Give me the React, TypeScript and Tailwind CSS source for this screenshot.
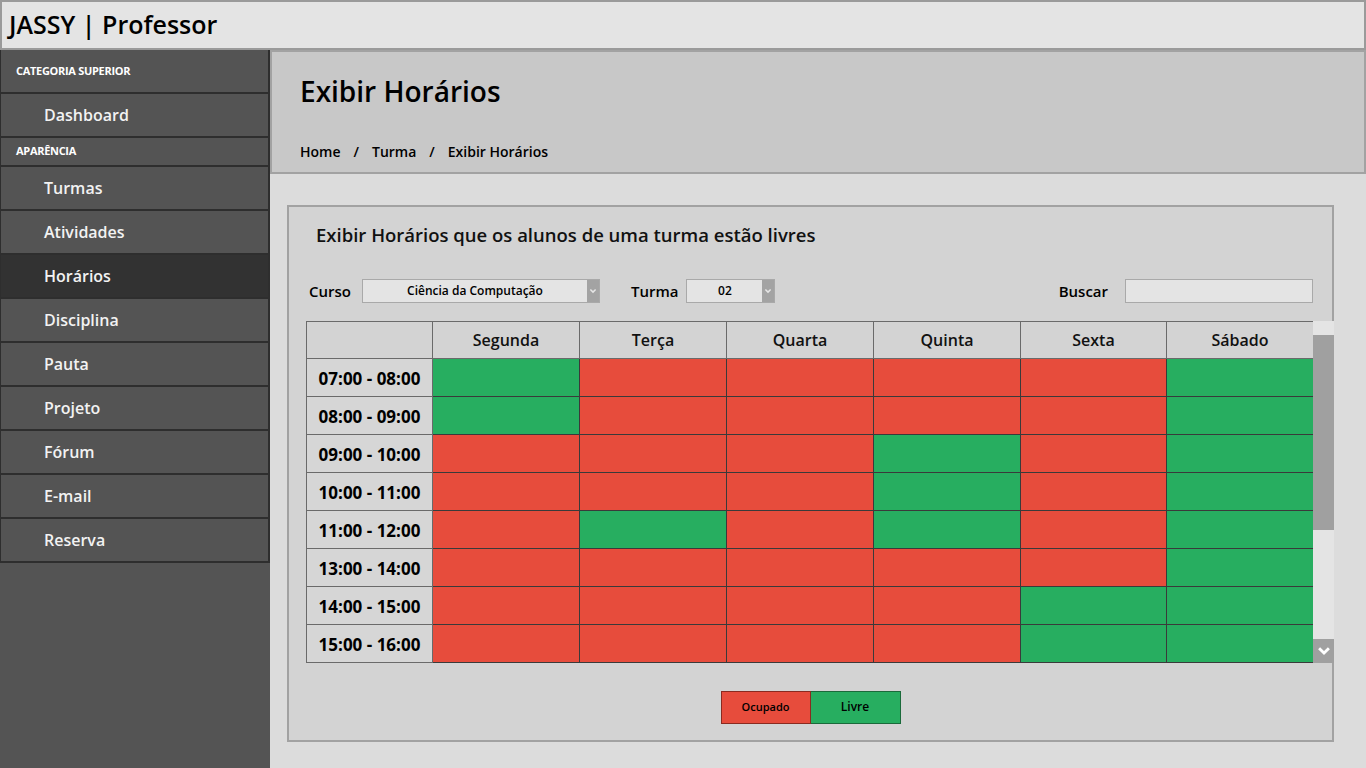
import React from 'react';

const font = { fontFamily: '"Open Sans", "Noto Sans", "Liberation Sans", sans-serif' };

type Item = { label: string; kind: 'cat' | 'item'; active?: boolean };

const menu: Item[] = [
  { label: 'CATEGORIA SUPERIOR', kind: 'cat' },
  { label: 'Dashboard', kind: 'item' },
  { label: 'APARÊNCIA', kind: 'cat' },
  { label: 'Turmas', kind: 'item' },
  { label: 'Atividades', kind: 'item' },
  { label: 'Horários', kind: 'item', active: true },
  { label: 'Disciplina', kind: 'item' },
  { label: 'Pauta', kind: 'item' },
  { label: 'Projeto', kind: 'item' },
  { label: 'Fórum', kind: 'item' },
  { label: 'E-mail', kind: 'item' },
  { label: 'Reserva', kind: 'item' },
];

const days = ['Segunda', 'Terça', 'Quarta', 'Quinta', 'Sexta', 'Sábado'];

// 1 = livre (verde), 0 = ocupado (vermelho)
const rows: { time: string; slots: number[] }[] = [
  { time: '07:00 - 08:00', slots: [1, 0, 0, 0, 0, 1] },
  { time: '08:00 - 09:00', slots: [1, 0, 0, 0, 0, 1] },
  { time: '09:00 - 10:00', slots: [0, 0, 0, 1, 0, 1] },
  { time: '10:00 - 11:00', slots: [0, 0, 0, 1, 0, 1] },
  { time: '11:00 - 12:00', slots: [0, 1, 0, 1, 0, 1] },
  { time: '13:00 - 14:00', slots: [0, 0, 0, 0, 0, 1] },
  { time: '14:00 - 15:00', slots: [0, 0, 0, 0, 1, 1] },
  { time: '15:00 - 16:00', slots: [0, 0, 0, 0, 1, 1] },
];

const Chevron: React.FC<{ className?: string }> = ({ className }) => (
  <svg viewBox="0 0 10 8" className={className}>
    <path d="M1.5 2 L5 5.5 L8.5 2" fill="none" stroke="currentColor" strokeWidth="2" />
  </svg>
);

const Select: React.FC<{ value: string; width: string }> = ({ value, width }) => (
  <div className={`flex h-[24px] ${width} border border-[#a9a9a9] bg-[#e4e4e4]`}>
    <div className="flex flex-1 items-center justify-center text-[12px] font-semibold text-black">{value}</div>
    <div className="flex w-[12px] items-center justify-center bg-[#a3a3a3] text-[#e6e6e6]">
      <Chevron className="h-[6px] w-[8px]" />
    </div>
  </div>
);

const Sidebar: React.FC = () => (
  <aside className="flex w-[270px] shrink-0 flex-col bg-[#545454]">
    {menu.map((m) =>
      m.kind === 'cat' ? (
        <div
          key={m.label}
          className={`flex items-center border-b-2 border-r-2 border-l border-[#2e2e2e] pl-[15px] text-[11px] font-bold tracking-[-0.3px] text-white ${
            m.label === 'APARÊNCIA' ? 'h-[29px]' : 'h-[44px]'
          }`}
        >
          {m.label}
        </div>
      ) : (
        <div
          key={m.label}
          className={`flex h-[44px] items-center border-b-2 border-r-2 border-l border-[#2e2e2e] pl-[43px] text-[16px] font-semibold text-[#f2f2f2] ${
            m.active ? 'bg-[#323232]' : 'bg-[#545454]'
          }`}
        >
          {m.label}
        </div>
      )
    )}
  </aside>
);

const Table: React.FC = () => (
  <div className="mt-[18px] flex">
    <div className="w-[1007px] shrink-0">
      <div className="grid h-[38px] grid-cols-[126px_147px_147px_147px_147px_146px_147px] border-t border-l border-[#6a6a6a] bg-[#d3d3d3]">
        <div className="border-r border-b border-[#6a6a6a]" />
        {days.map((d) => (
          <div
            key={d}
            className="flex items-center justify-center border-r border-b border-[#6a6a6a] text-[16px] font-semibold text-[#111]"
          >
            {d}
          </div>
        ))}
      </div>
      {rows.map((r) => (
        <div
          key={r.time}
          className="grid h-[38px] grid-cols-[126px_147px_147px_147px_147px_146px_147px] border-l border-[#6a6a6a]"
        >
          <div className="flex items-center justify-center border-r border-b border-[#6a6a6a] bg-[#d6d6d6] pt-[3px] text-[17px] font-bold text-black">
            {r.time}
          </div>
          {r.slots.map((s, i) => (
            <div
              key={i}
              className={`border-r border-b border-[#3a3a3a] ${s ? 'bg-[#27ae60]' : 'bg-[#e74c3c]'}`}
            />
          ))}
        </div>
      ))}
    </div>
    <div className="flex w-[21px] shrink-0 flex-col bg-[#e4e4e4]">
      <div className="h-[14px]" />
      <div className="h-[195px] bg-[#a0a0a0]" />
      <div className="flex-1" />
      <div className="flex h-[24px] items-center justify-center bg-[#a0a0a0] text-white">
        <Chevron className="h-[12px] w-[14px]" />
      </div>
    </div>
  </div>
);

export default function App() {
  return (
    <div className="flex h-[768px] w-[1366px] flex-col overflow-hidden bg-[#dcdcdc]" style={font}>
      <header className="flex h-[50px] shrink-0 items-center border-2 border-[#9a9a9a] bg-[#e4e4e4] pl-[7px]">
        <h1 className="text-[25px] font-semibold text-black">JASSY | Professor</h1>
      </header>
      <div className="flex min-h-0 flex-1">
        <Sidebar />
        <main className="flex min-w-0 flex-1 flex-col">
          <section className="flex h-[124px] shrink-0 flex-col border-2 border-[#a2a2a2] bg-[#c8c8c8] pl-[28px]">
            <h2 className="mt-[18px] text-[28px] leading-[42px] font-semibold text-black">Exibir Horários</h2>
            <nav className="mt-[30px] flex gap-[13px] text-[14px] leading-[20px] font-semibold text-black">
              <span>Home</span>
              <span>/</span>
              <span>Turma</span>
              <span>/</span>
              <span>Exibir Horários</span>
            </nav>
          </section>
          <div className="pt-[31px] pr-[32px] pl-[17px]">
            <div className="h-[537px] border-2 border-[#a2a2a2] bg-[#d3d3d3] pl-[17px]">
              <h3 className="mt-[14px] pl-[10px] text-[18.5px] font-semibold text-[#111]">
                Exibir Horários que os alunos de uma turma estão livres
              </h3>
              <div className="mt-[30px] flex items-center pl-[3px]">
                <span className="mr-[11px] text-[15px] font-semibold text-black">Curso</span>
                <Select value="Ciência da Computação" width="w-[238px]" />
                <span className="mr-[8px] ml-[31px] text-[15px] font-semibold text-black">Turma</span>
                <Select value="02" width="w-[89px]" />
                <span className="mr-[17px] ml-auto text-[15px] font-semibold text-black">Buscar</span>
                <div className="mr-[19px] h-[24px] w-[188px] border border-[#a9a9a9] bg-[#e4e4e4]" />
              </div>
              <Table />
              <div className="mt-[28px] flex justify-center pr-[17px]">
                <div className="flex h-[33px] w-[90px] items-center justify-center border border-[#8a2a20] bg-[#e74c3c] text-[11px] font-semibold text-black">
                  Ocupado
                </div>
                <div className="flex h-[33px] w-[90px] items-center justify-center border border-l-0 border-[#1a6a3a] bg-[#27ae60] text-[12px] font-semibold text-black">
                  Livre
                </div>
              </div>
            </div>
          </div>
        </main>
      </div>
    </div>
  );
}
